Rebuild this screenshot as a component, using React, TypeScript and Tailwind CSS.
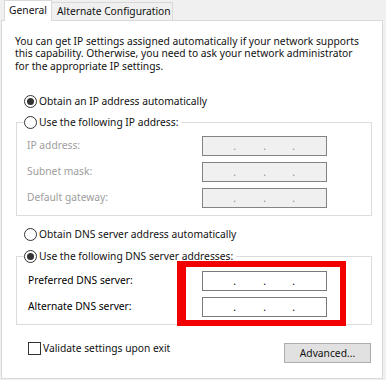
import React from "react";

function Radio({ checked }: { checked?: boolean }) {
  return (
    <span className="w-[13px] h-[13px] rounded-full border border-[#333333] bg-white flex items-center justify-center shrink-0">
      {checked && <span className="w-[7px] h-[7px] rounded-full bg-[#333333]" />}
    </span>
  );
}

function IpBox({ disabled }: { disabled?: boolean }) {
  return (
    <div
      className={
        disabled
          ? "w-[125px] h-[20px] border border-[#838383] bg-[#f0f0f0] text-[#8a8a8a] flex items-center leading-none"
          : "w-[125px] h-[20px] border border-[#7a7a7a] bg-white text-black flex items-center leading-none"
      }
    >
      <span className="w-[3px] ml-[30px] text-center">.</span>
      <span className="w-[3px] ml-[27px] text-center">.</span>
      <span className="w-[3px] ml-[26px] text-center">.</span>
    </div>
  );
}

function Row({ label, disabled }: { label: string; disabled?: boolean }) {
  return (
    <div className="flex items-center h-[20px]">
      <div className={disabled ? "w-[185px] pl-[10px] text-[#9d9d9d]" : "w-[185px] pl-[11px] text-black"}>{label}</div>
      <IpBox disabled={disabled} />
    </div>
  );
}

export default function App() {
  return (
    <div className="w-[386px] h-[380px] bg-[#f0f0f0] relative overflow-hidden font-['Noto_Sans','DejaVu_Sans',sans-serif] text-[10.25px] text-[#111111]">
      <div className="flex items-end h-[20px] pl-[4px]">
        <div className="relative z-10 h-[21px] -mb-px w-[48px] bg-white border border-b-0 border-[#d9d9d9] flex items-center justify-center">
          General
        </div>
        <div className="h-[18px] w-[121px] bg-[#f0f0f0] border border-b-0 border-l-0 border-[#d9d9d9] flex items-center pl-[5px] pt-[1px] whitespace-nowrap">
          Alternate Configuration
        </div>
      </div>
      <div className="ml-[1px] w-[382px] h-[359px] bg-white border border-[#d9d9d9] flex flex-col">
        <p className="mt-[14px] pl-[13px] leading-[12.25px] whitespace-nowrap">
          You can get IP settings assigned automatically if your network supports
          <br />
          this capability. Otherwise, you need to ask your network administrator
          <br />
          for the appropriate IP settings.
        </p>

        <div className="mt-[20px] h-[20px] pl-[22px] flex items-center gap-[2px]">
          <Radio checked />
          <span>Obtain an IP address automatically</span>
        </div>

        <fieldset className="mt-[1px] ml-[14px] w-[356px] border border-[#dcdcdc] pb-[7px]">
          <legend className="ml-[7px] pr-[3px]">
            <div className="h-[20px] flex items-center gap-[2px]">
              <Radio />
              <span>Use the following IP address:</span>
            </div>
          </legend>
          <div className="pt-[3px] flex flex-col gap-[6px]">
            <Row label="IP address:" disabled />
            <Row label="Subnet mask:" disabled />
            <Row label="Default gateway:" disabled />
          </div>
        </fieldset>

        <div className="mt-[9px] h-[20px] pl-[22px] flex items-center gap-[2px]">
          <Radio />
          <span>Obtain DNS server address automatically</span>
        </div>

        <fieldset className="mt-[2px] ml-[14px] w-[356px] border border-[#dcdcdc] pb-[7px]">
          <legend className="ml-[7px] pr-[3px]">
            <div className="h-[20px] flex items-center gap-[2px]">
              <Radio checked />
              <span>Use the following DNS server addresses:</span>
            </div>
          </legend>
          <div className="pt-[4px] flex flex-col gap-[6px]">
            <Row label="Preferred DNS server:" />
            <Row label="Alternate DNS server:" />
          </div>
        </fieldset>

        <div className="flex justify-between items-start pl-[26px] pr-[11px] mt-[17px]">
          <div className="flex items-center gap-[2px] h-[13px]">
            <span className="w-[13px] h-[13px] border border-[#333333] bg-white shrink-0" />
            <span>Validate settings upon exit</span>
          </div>
          <button className="mt-[1.5px] w-[87px] h-[20px] bg-[#e1e1e1] border border-[#adadad] flex items-center justify-center">
            Advanced...
          </button>
        </div>
      </div>

      <div className="absolute left-[177px] top-[261px] w-[169px] h-[65px] border-t-[6px] border-r-[6px] border-b-[6px] border-l-[9px] border-[#f20000]" />
    </div>
  );
}
